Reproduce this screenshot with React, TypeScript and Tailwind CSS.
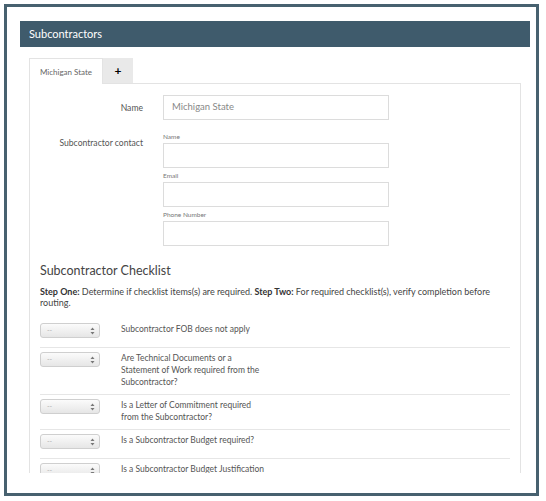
import type { ReactNode } from "react";

const checklist = [
  ["Subcontractor FOB does not apply"],
  ["Are Technical Documents or a", "Statement of Work required from the", "Subcontractor?"],
  ["Is a Letter of Commitment required", "from the Subcontractor?"],
  ["Is a Subcontractor Budget required?"],
  ["Is a Subcontractor Budget Justification", "required?"],
];

function SelectBox() {
  return (
    <div className="mt-[1px] flex h-[15px] w-[60px] shrink-0 items-center justify-between rounded-[3px] border border-[#cfcfcf] bg-gradient-to-b from-[#fbfbfb] to-[#e6e6e6] pl-[6px] pr-[4px] text-[7px] leading-none text-[#b0b0b0]">
      <span>--</span>
      <svg width="5" height="8" viewBox="0 0 5 8">
        <path d="M2.5 0.5 L4.5 3 L0.5 3 Z" fill="#777" />
        <path d="M2.5 7.5 L4.5 5 L0.5 5 Z" fill="#777" />
      </svg>
    </div>
  );
}

function FieldRow({
  label,
  children,
  center,
}: {
  label: string;
  children: ReactNode;
  center?: boolean;
}) {
  return (
    <div className={`flex ${center ? "items-center" : "items-start"}`}>
      <div
        className={`w-[113px] shrink-0 text-right text-[8.6px] leading-[12px] text-[#555] ${
          center ? "" : "mt-[5px]"
        }`}
      >
        {label}
      </div>
      <div className="ml-[20px] w-[226px]">{children}</div>
    </div>
  );
}

function SubField({ label, first }: { label: string; first?: boolean }) {
  return (
    <>
      <div className={`${first ? "" : "mt-[3px]"} text-[6.5px] leading-[9px] text-[#777]`}>
        {label}
      </div>
      <div className="mt-[2px] h-[25px] border border-[#dcdcdc]" />
    </>
  );
}

export default function App() {
  return (
    <div
      className="h-[501px] w-[546px] bg-white p-[4px]"
      style={{ fontFamily: "Lato, 'Open Sans', sans-serif" }}
    >
      <div className="h-[492px] w-[535px] border-[3px] border-[#47616f] bg-white">
        <div className="ml-[13px] mr-[6px] mt-[14px] flex h-[26px] items-center bg-[#3f5b6c] pl-[9px] text-[11px] text-white">
          Subcontractors
        </div>

        <div className="ml-[22px] mr-[15px] mt-[11px]">
          <div className="flex">
            <div className="flex h-[26px] w-[74px] items-center justify-center border-x border-t border-[#e3e3e3] bg-white text-[8px] text-[#666]">
              Michigan State
            </div>
            <div className="flex h-[26px] w-[30px] items-center justify-center border-b border-[#e3e3e3] bg-[#e9e9e9] text-[12px] font-bold text-black">
              +
            </div>
            <div className="flex-1 border-b border-[#e3e3e3]" />
          </div>

          <div className="h-[389px] overflow-hidden border-x border-[#e3e3e3] bg-white">
            <div className="pt-[11px]">
              <FieldRow label="Name" center>
                <div className="flex h-[25px] items-center border border-[#dcdcdc] pl-[8px] text-[9.5px] text-[#888]">
                  Michigan State
                </div>
              </FieldRow>
              <div className="mt-[12px]">
                <FieldRow label="Subcontractor contact">
                  <SubField label="Name" first />
                  <SubField label="Email" />
                  <SubField label="Phone Number" />
                </FieldRow>
              </div>
            </div>

            <div className="pl-[10px] pr-[10px] pt-[17px]">
              <h3 className="text-[12.5px] leading-[16px] text-[#444]">Subcontractor Checklist</h3>
              <p className="mt-[7px] text-[9px] leading-[11px] text-[#444]">
                <b className="text-[#333]">Step One:</b> Determine if checklist items(s) are required.{" "}
                <b className="text-[#333]">Step Two:</b> For required checklist(s), verify completion before
                routing.
              </p>

              <div className="mt-[11px]">
                {checklist.map((lines, i) => (
                  <div
                    key={i}
                    className="flex items-start border-b border-[#e6e6e6] pb-[6px] pt-[3px]"
                  >
                    <div className="flex min-h-[19px] items-start">
                      <SelectBox />
                    </div>
                    <div className="ml-[21px] mt-[1px] text-[8.5px] leading-[12px] text-[#555]">
                      {lines.map((l) => (
                        <div key={l}>{l}</div>
                      ))}
                    </div>
                  </div>
                ))}
              </div>
            </div>
          </div>
        </div>
      </div>
    </div>
  );
}
